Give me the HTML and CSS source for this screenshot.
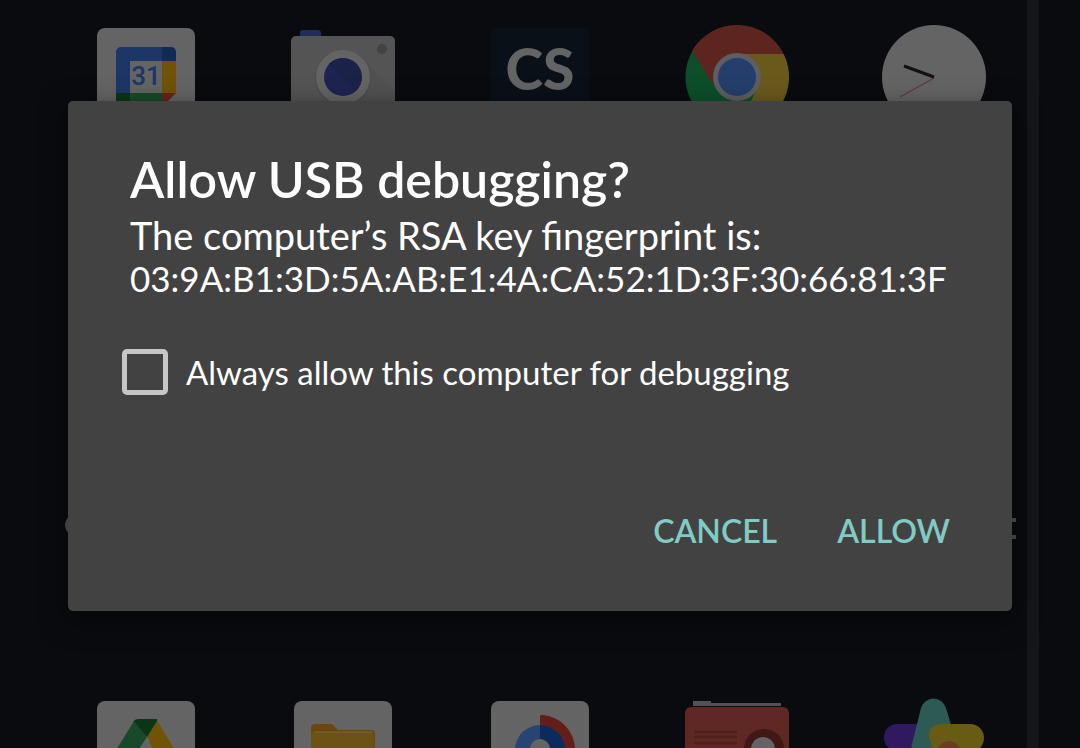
FILE: index.html
```html
<!DOCTYPE html>
<html lang="en">
<head>
<meta charset="utf-8">
<meta name="viewport" content="width=device-width, initial-scale=1">
<title>Allow USB debugging?</title>
<link rel="stylesheet" href="styles.css">
</head>
<body>
<div class="screen">
  <div class="home" aria-hidden="true">
    <svg class="app" viewBox="0 0 104 104">
      <rect x="3" y="3" width="98" height="98" rx="8" fill="#646464"/>
      <path d="M27 22h41v14H36v32H22V27a5 5 0 0 1 5-5z" fill="#1c3767"/>
      <path d="M68 22h9a5 5 0 0 1 5 5v9H68z" fill="#122a55"/>
      <path d="M68 36h14v32H68z" fill="#705306"/>
      <path d="M36 68h32v14H36z" fill="#174b27"/>
      <path d="M22 68h14v14h-9a5 5 0 0 1-5-5z" fill="#0c3518"/>
      <path d="M68 68h14L68 82z" fill="#6b2219"/>
      <text class="day" x="52" y="60">31</text>
    </svg>
    <svg class="app" viewBox="0 0 104 104">
      <rect x="9" y="5" width="21" height="16" rx="3" fill="#1f2d5a"/>
      <rect x="0" y="11" width="104" height="90" rx="5" fill="#545454"/>
      <path d="M71 33l33 33v35H50z" fill="#515151"/>
      <circle cx="91" cy="24" r="5" fill="#434343"/>
      <circle cx="52" cy="53" r="28" fill="#4e4e4e"/>
      <circle cx="52" cy="52" r="27" fill="#646464"/>
      <circle cx="52" cy="52" r="19" fill="#1d2450"/>
      <path d="M38 39a19 19 0 0 1 27 27z" fill="#1b224a"/>
    </svg>
    <svg class="app" viewBox="0 0 104 104">
      <rect x="3" y="3" width="98" height="98" rx="6" fill="#0a1018"/>
      <text class="brand" x="52" y="65">CS</text>
    </svg>
    <svg class="app" viewBox="0 0 104 104">
      <circle cx="52" cy="52" r="51.500" fill="#0c4f2a"/>
      <path d="M52 29h46.700A52 52 0 0 1 52 104l20-40z" fill="#6b591c"/>
      <path d="M7 26A52 52 0 0 1 98.700 29H52L29 61z" fill="#5c2520"/>
      <circle cx="52" cy="52" r="24" fill="#5e5e62"/>
      <circle cx="52" cy="52" r="19" fill="#243f6c"/>
    </svg>
    <svg class="app" viewBox="0 0 104 104">
      <circle cx="52" cy="52" r="52" fill="#646464"/>
      <path d="M52 53L18 72" stroke="#653832" stroke-width="1.200"/>
      <path d="M52 52L22 41" stroke="#111" stroke-width="3"/>
    </svg>
    <svg class="app" viewBox="0 0 104 104">
      <rect x="3" y="3" width="98" height="98" rx="8" fill="#646464"/>
      <path d="M62 21l22 36H61L53 38z" fill="#705306"/>
      <path d="M39 24q2-3 5-3h18q2 0 1 2L53 39z" fill="#0c3518"/>
      <path d="M40 23L19 57h22l12-18z" fill="#17492a"/>
    </svg>
    <svg class="app" viewBox="0 0 104 104">
      <rect x="3" y="3" width="98" height="98" rx="8" fill="#646464"/>
      <path d="M24 26h15q2 0 3 1l5 5h33q4 0 4 4v40H20V30q0-4 4-4z" fill="#6c4611"/>
      <path d="M24 34h56q3 0 3 3v40H20V38q0-4 4-4z" fill="#6c5214"/>
      <path d="M23 34h58" stroke="#7a673b" stroke-width="1"/>
    </svg>
    <svg class="app" viewBox="0 0 104 104">
      <rect x="3" y="3" width="98" height="98" rx="8" fill="#646464"/>
      <path d="M52 52V19q0-3 3-2a35 35 0 0 1 32 35z" fill="#641d17"/>
      <circle cx="52" cy="52" r="25" fill="#284474"/>
      <path d="M52 27a25 25 0 0 1 0 50z" fill="#0d2a5c"/>
      <circle cx="52" cy="51" r="10" fill="#646464"/>
    </svg>
    <svg class="app" viewBox="0 0 104 104">
      <path d="M8 3h18v2h70v3H8z" fill="#515253"/>
      <rect x="0" y="9" width="104" height="90" rx="6" fill="#5f2825"/>
      <path d="M9 34h43M9 39h43M9 45h43" stroke="#4e201e" stroke-width="3"/>
      <circle cx="79" cy="51" r="20" fill="#401817"/>
      <circle cx="78" cy="51" r="12" fill="#646464"/>
    </svg>
    <svg class="app" viewBox="0 0 104 104">
      <rect x="2" y="26" width="60" height="27" rx="13" fill="#31195f"/>
      <path d="M39 10a13 13 0 0 1 25 0l9 30-20 20H36q-8-6-6-14z" fill="#2c5a55"/>
      <path d="M60 26h28a13 13 0 0 1 0 28H52l-5-14q-2-13 13-14z" fill="#685b14"/>
      <circle cx="67" cy="55" r="12" fill="#6b3c22"/>
    </svg>
  </div>
  <svg class="peek peek-left" viewBox="0 0 12 28" aria-hidden="true"><circle cx="12" cy="12" r="11" fill="#515254"/></svg>
  <svg class="peek peek-right" viewBox="0 0 12 28" aria-hidden="true"><path d="M0 7h12M0 24h12" stroke="#515254" stroke-width="4"/></svg>
  <div class="edge"></div>

  <main class="overlay">
    <form class="dialog" role="dialog" aria-labelledby="title" aria-describedby="message">
      <h1 class="title" id="title">Allow USB debugging?</h1>
      <div class="message" id="message">
        <p class="line">The computer’s RSA key fingerprint is:</p>
        <p class="line fingerprint">03:9A:B1:3D:5A:AB:E1:4A:CA:52:1D:3F:30:66:81:3F</p>
      </div>
      <label class="always" for="always">
        <input class="check" type="checkbox" id="always">
        <span>Always allow this computer for debugging</span>
      </label>
      <div class="actions">
        <button class="action" type="button">CANCEL</button>
        <button class="action" type="button">ALLOW</button>
      </div>
    </form>
  </main>
</div>
</body>
</html>
```
FILE: styles.css
```css
* {
  box-sizing: border-box;
}

body {
  margin: 0;
  background: #090b0f;
  color: #fff;
  font-family: Lato, "Noto Sans", sans-serif;
}

.screen {
  position: relative;
  height: 100vh;
  overflow: hidden;
}

.home {
  display: grid;
  grid-template-columns: repeat(5, 1fr);
  justify-items: center;
  row-gap: 569px;
  padding: 25px 48px 0;
}

.app {
  display: block;
  width: 104px;
  height: 104px;
}

.day {
  font: 500 26px Roboto, sans-serif;
  text-anchor: middle;
  fill: #1c3767;
}

.brand {
  font: 900 57px Lato, sans-serif;
  text-anchor: middle;
  fill: #646464;
}

.peek {
  position: absolute;
  top: 513px;
  width: 12px;
  height: 28px;
}

.peek-left {
  left: 64px;
}

.peek-right {
  right: 64px;
}

.edge {
  position: absolute;
  top: 0;
  bottom: 0;
  right: 41px;
  width: 12px;
  background: #15161a;
}

.overlay {
  position: absolute;
  inset: 0;
  padding: 101px 68px;
}

.dialog {
  padding: 48px 52px 44px 54px;
  border-radius: 5px;
  background: #424242;
  box-shadow: 0 8px 28px rgba(0, 0, 0, 0.5);
}

.title {
  margin: 0;
  padding-left: 8px;
  font-size: 50px;
  font-weight: 600;
  line-height: 60px;
}

.message {
  margin-top: 5px;
  padding-left: 8px;
}

.line {
  margin: 0;
  font-size: 38px;
  line-height: 43px;
}

.fingerprint {
  font-size: 35px;
}

.always {
  display: flex;
  align-items: center;
  gap: 18px;
  margin-top: 49px;
  font-size: 33px;
  line-height: 46px;
}

.check {
  appearance: none;
  flex: none;
  width: 46px;
  height: 46px;
  margin: 0;
  border: 5px solid #c6c6c6;
  border-radius: 5px;
}

.check:checked {
  background: #80cbc4;
}

.actions {
  display: flex;
  justify-content: flex-end;
  gap: 40px;
  margin-top: 100px;
}

.action {
  padding: 12px 10px;
  border: 0;
  background: none;
  color: #80cbc4;
  font: 600 32px/48px Lato, sans-serif;
}
```
